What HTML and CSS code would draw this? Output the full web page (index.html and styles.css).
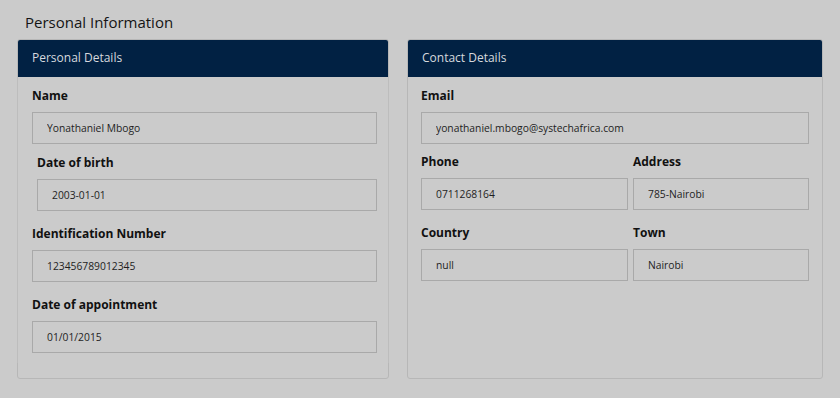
FILE: index.html
```html
<!DOCTYPE html>
<html lang="en">
<head>
<meta charset="utf-8">
<title>Personal Information</title>
<link rel="stylesheet" href="styles.css">
</head>
<body>
<div class="page">
  <h2 class="title">Personal Information</h2>
  <div class="cards">
    <section class="card card-left">
      <div class="card-head">Personal Details</div>
      <div class="card-body">
        <div class="group group-first group-name">
          <label class="label">Name</label>
          <input class="field" type="text" value="Yonathaniel Mbogo" readonly>
        </div>
        <div class="group group-indent">
          <label class="label">Date of birth</label>
          <input class="field" type="text" value="2003-01-01" readonly>
        </div>
        <div class="group">
          <label class="label">Identification Number</label>
          <input class="field" type="text" value="123456789012345" readonly>
        </div>
        <div class="group group-last">
          <label class="label">Date of appointment</label>
          <input class="field" type="text" value="01/01/2015" readonly>
        </div>
      </div>
    </section>
    <section class="card card-right">
      <div class="card-head">Contact Details</div>
      <div class="card-body">
        <div class="group group-first">
          <label class="label">Email</label>
          <input class="field" type="text" value="yonathaniel.mbogo@systechafrica.com" readonly>
        </div>
        <div class="row">
          <div class="group">
            <label class="label">Phone</label>
            <input class="field" type="text" value="0711268164" readonly>
          </div>
          <div class="group">
            <label class="label">Address</label>
            <input class="field" type="text" value="785-Nairobi" readonly>
          </div>
        </div>
        <div class="row">
          <div class="group group-last">
            <label class="label">Country</label>
            <input class="field" type="text" value="null" readonly>
          </div>
          <div class="group group-last">
            <label class="label">Town</label>
            <input class="field" type="text" value="Nairobi" readonly>
          </div>
        </div>
      </div>
    </section>
  </div>
</div>
</body>
</html>
```

FILE: styles.css
```css
html, body {
  margin: 0;
  background: #cbcbcb;
  font-family: "Open Sans", "DejaVu Sans", sans-serif;
}

.page {
  padding: 12px 17px 0 17px;
}

.title {
  margin: 0 0 7px 8px;
  font-size: 15px;
  line-height: 20px;
  font-weight: 500;
  color: #141414;
}

.cards {
  display: grid;
  grid-template-columns: 372px 416px;
  column-gap: 18px;
  align-items: stretch;
}

.card {
  border: 1px solid #b7b7b7;
  border-radius: 3px;
  display: flex;
  flex-direction: column;
}

.card-left {
  padding-bottom: 15px;
}

.card-head {
  background: #012143;
  color: #d6d9de;
  font-size: 12px;
  height: 37px;
  line-height: 36px;
  padding-left: 14px;
  border-radius: 2px 2px 0 0;
}

.card-left .card-body {
  padding: 10px 11px 10px 14px;
  border-left: 1px solid #bdbdbd;
  border-right: 1px solid #bdbdbd;
  margin: 0 -1px;
}

.card-right .card-body {
  padding: 10px 13px 10px 13px;
}

.group {
  display: flex;
  flex-direction: column;
  margin-bottom: 14px;
}

.group-first {
  margin-bottom: 9px;
}

.group-name {
  margin-bottom: 10px;
}

.group-last {
  margin-bottom: 0;
}

.group-indent {
  margin-left: 5px;
}

.label {
  font-size: 12px;
  font-weight: 700;
  line-height: 18px;
  color: #111111;
  margin-bottom: 7px;
}

.field {
  box-sizing: border-box;
  height: 32px;
  width: 100%;
  margin: 0;
  padding: 0 14px;
  border: 1px solid #a9a9a9;
  border-radius: 0;
  background: #cbcbcb;
  font-family: "Open Sans", "DejaVu Sans", sans-serif;
  font-size: 10.3px;
  color: #1e1e1e;
  outline: none;
}

.row {
  display: grid;
  grid-template-columns: 207fr 176fr;
  column-gap: 5px;
}
```
